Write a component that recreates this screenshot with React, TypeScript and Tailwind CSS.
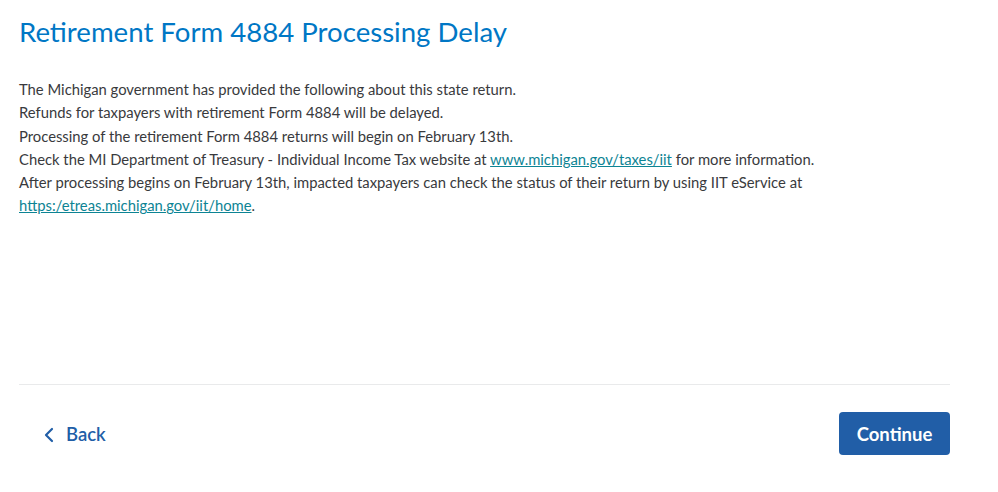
export default function App() {
  return (
    <div className="w-[998px] h-[492px] bg-white font-['Lato','Open_Sans',sans-serif] text-[#393a3d] overflow-hidden">
      <div className="px-[19px] pt-[15px]">
        <h1 className="text-[27.6px] leading-[34px] text-[#0077c5] font-normal">
          Retirement Form 4884 Processing Delay
        </h1>

        <div className="mt-[29px] h-[306px] text-[14.8px] leading-[23.3px]">
          <p>The Michigan government has provided the following about this state return.</p>
          <p>Refunds for taxpayers with retirement Form 4884 will be delayed.</p>
          <p>Processing of the retirement Form 4884 returns will begin on February 13th.</p>
          <p>
            Check the MI Department of Treasury - Individual Income Tax website at{" "}
            <a href="#" className="text-[#0d8494] underline">www.michigan.gov/taxes/iit</a> for more information.
          </p>
          <p>
            After processing begins on February 13th, impacted taxpayers can check the status of their return by using IIT eService at{" "}
            <a href="#" className="text-[#0d8494] underline">https:/etreas.michigan.gov/iit/home</a>.
          </p>
        </div>

        <div className="w-[931px] border-t border-[#e9eaeb]" />

        <div className="w-[931px] flex items-center justify-between mt-[27px]">
          <button className="flex items-center gap-[12px] pl-[25px] text-[18.5px] font-semibold text-[#215ea7] mt-[2px]">
            <svg width="10" height="16" viewBox="0 0 10 16" fill="none" stroke="currentColor" strokeWidth="2.2" strokeLinecap="round" strokeLinejoin="round">
              <path d="M8 2L2 8l6 6" />
            </svg>
            Back
          </button>
          <button className="w-[111px] h-[43px] rounded-[4px] bg-[#215ea7] text-white text-[18.5px] font-bold pt-[2px]">
            Continue
          </button>
        </div>
      </div>
    </div>
  );
}
